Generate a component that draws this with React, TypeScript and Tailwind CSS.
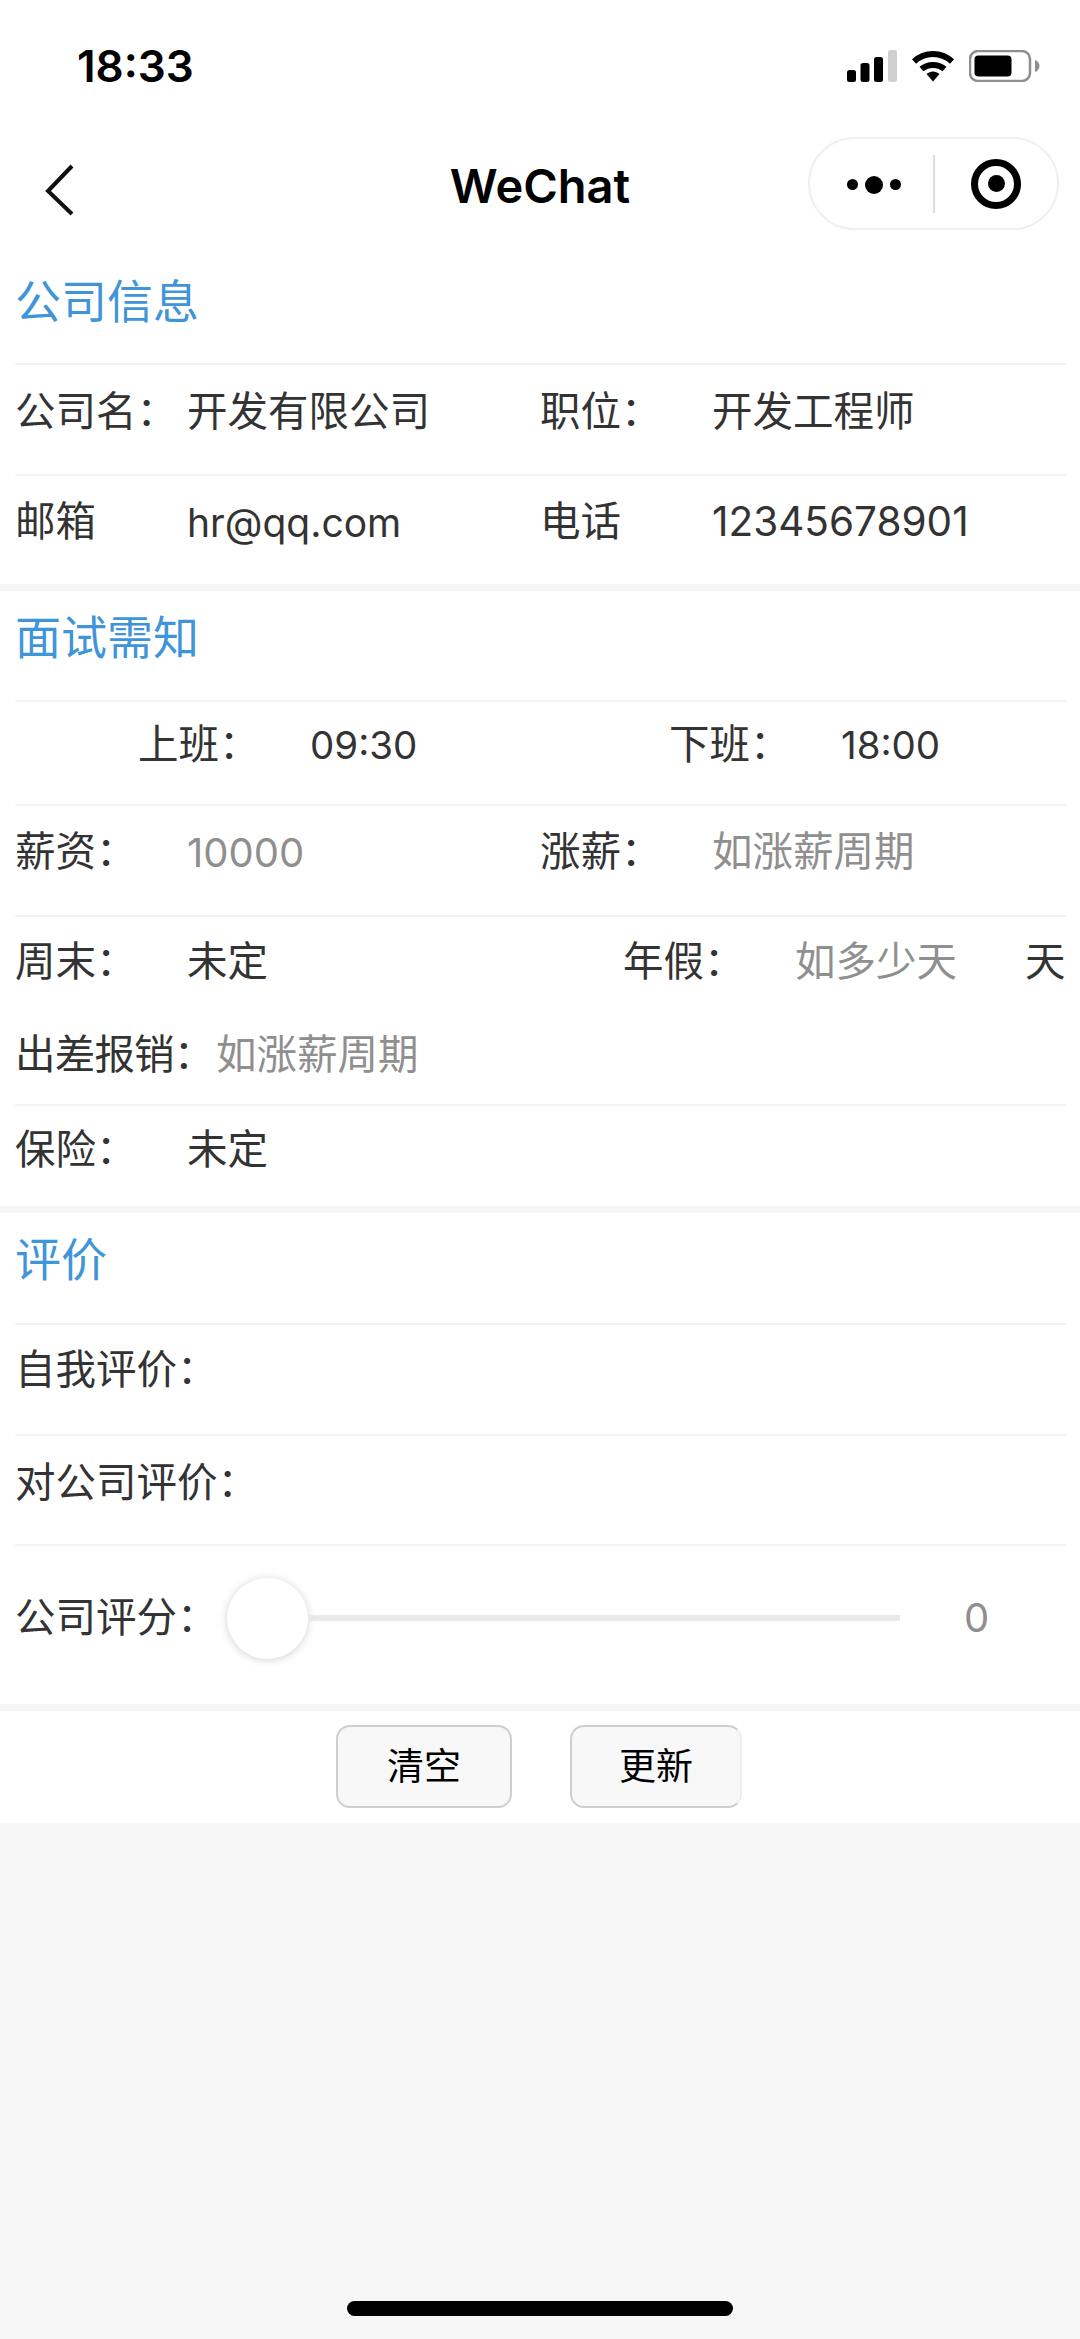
const cjk = "font-['Inter','Noto_Sans_CJK_SC',sans-serif]";

function Signal() {
  return (
    <svg width="50" height="32" viewBox="0 0 50 32" fill="none">
      <rect x="0" y="20" width="9" height="12" rx="2.5" fill="#000" />
      <rect x="13.5" y="13" width="9" height="19" rx="2.5" fill="#000" />
      <rect x="27" y="7" width="9" height="25" rx="2.5" fill="#000" />
      <rect x="41" y="0" width="9" height="32" rx="2.5" fill="#cfcfcf" />
    </svg>
  );
}

function Wifi() {
  return (
    <svg width="44" height="32" viewBox="0 0 44 32" fill="none">
      <path d="M3 11.5C14 1.5 30 1.5 41 11.5" stroke="#000" strokeWidth="6" />
      <path d="M10.5 19C17 13.5 27 13.5 33.5 19" stroke="#000" strokeWidth="6" />
      <path d="M15.5 24C19.5 20.5 24.5 20.5 28.5 24L22 31.5Z" fill="#000" />
    </svg>
  );
}

function Battery() {
  return (
    <svg width="71" height="32" viewBox="0 0 71 32" fill="none">
      <rect x="1" y="1" width="60" height="30" rx="8" stroke="#8e8e8e" strokeWidth="2.5" />
      <rect x="5.5" y="5.5" width="37" height="21" rx="4" fill="#000" />
      <path d="M66 10C69 11 70.5 13.5 70.5 16C70.5 18.5 69 21 66 22Z" fill="#8e8e8e" />
    </svg>
  );
}

function Row({ children, border = true, className = "" }: { children: React.ReactNode; border?: boolean; className?: string }) {
  return (
    <div className={`ml-[15px] mr-[14px] flex items-center ${border ? "border-b-2 border-[#f3f3f3]" : ""} ${className}`}>
      {children}
    </div>
  );
}

function Field({ label, value, muted = false, className = "", valueClass = "" }: { label: string; value: string; muted?: boolean; className?: string; valueClass?: string }) {
  return (
    <div className={`flex items-center ${className}`}>
      <span className="w-[172px] text-[#333333]">{label}</span>
      <span className={`${muted ? "text-[#8f8f8f]" : "text-[#333333]"} ${valueClass}`}>{value}</span>
    </div>
  );
}

function SectionTitle({ text, className }: { text: string; className: string }) {
  return (
    <div className={`ml-[15px] mr-[14px] flex items-center border-b-2 border-[#f3f3f3] text-[46px] text-[#4095d9] ${className}`}>
      {text}
    </div>
  );
}

function Band() {
  return <div className="h-[7px] bg-[#f6f6f6]" />;
}

export default function App() {
  return (
    <div className={`relative flex h-[2339px] w-[1080px] flex-col overflow-hidden bg-[#f7f7f7] text-[40.5px] leading-none ${cjk}`}>
      <div className="bg-white">
        {/* status bar */}
        <div className="flex h-[132px] items-start justify-between pt-[44px] pl-[77px] pr-[40px]">
          <span className="text-[44px] leading-[44px] font-semibold text-black">18:33</span>
          <div className="flex items-center gap-[14px] pt-[6px]">
            <Signal />
            <Wifi />
            <Battery />
          </div>
        </div>

        {/* nav */}
        <div className="relative flex h-[108px] items-center justify-center">
          <svg className="absolute left-[44px] top-[32px]" width="32" height="52" viewBox="0 0 32 52" fill="none">
            <path d="M28 2L4 27L28 50" stroke="#111" strokeWidth="4" />
          </svg>
          <span className="-mt-[2px] text-[47px] font-semibold text-black">WeChat</span>
          <div className="absolute left-[808px] top-[5px] flex h-[93px] w-[251px] items-center rounded-full border-2 border-[#f0f0f0]">
            <div className="flex flex-1 items-center justify-center gap-[7px] pl-[5px] pt-[2px]">
              <div className="size-[11px] rounded-full bg-black" />
              <div className="size-[18px] rounded-full bg-black" />
              <div className="size-[11px] rounded-full bg-black" />
            </div>
            <div className="h-[58px] w-[2px] bg-[#dddddd]" />
            <div className="flex w-[122px] items-center justify-center">
              <div className="flex size-[50px] items-center justify-center rounded-full border-[7px] border-black">
                <div className="size-[17px] rounded-full bg-black" />
              </div>
            </div>
          </div>
        </div>

        {/* company info */}
        <SectionTitle text="公司信息" className="h-[125px] pb-[2px]" />
        <Row className="h-[111px] pb-[15px]">
          <Field label="公司名：" value="开发有限公司" className="w-[525px]" />
          <Field label="职位：" value="开发工程师" />
        </Row>
        <Row border={false} className="h-[108px] pb-[15px]">
          <Field label="邮箱" value="hr@qq.com" className="w-[525px]" valueClass="text-[39px]" />
          <Field label="电话" value="12345678901" valueClass="text-[40.5px]" />
        </Row>
        <Band />

        {/* interview notes */}
        <SectionTitle text="面试需知" className="h-[111px] pb-[18px]" />
        <Row className="h-[104px] pb-[16px] pl-[123px]">
          <Field label="上班：" value="09:30" className="w-[531px]" valueClass="text-[38.5px]" />
          <Field label="下班：" value="18:00" valueClass="text-[38.5px]" />
        </Row>
        <Row className="h-[111px] pb-[16px]">
          <Field label="薪资：" value="10000" muted className="w-[525px]" valueClass="text-[40px]" />
          <Field label="涨薪：" value="如涨薪周期" muted />
        </Row>
        <Row border={false} className="h-[94px] pb-[3px]">
          <Field label="周末：" value="未定" className="w-[608px]" />
          <Field label="年假：" value="如多少天" muted className="w-[402px]" />
          <span className="text-[#333333]">天</span>
        </Row>
        <Row className="h-[95px] pb-[4px]">
          <span className="w-[201px] shrink-0 whitespace-nowrap text-[#333333] tracking-[-0.8px]">出差报销：</span>
          <span className="text-[#8f8f8f]">如涨薪周期</span>
        </Row>
        <Row border={false} className="h-[100px] pb-[12px]">
          <Field label="保险：" value="未定" />
        </Row>
        <Band />

        {/* review */}
        <SectionTitle text="评价" className="h-[112px] pb-[18px]" />
        <Row className="h-[111px] pb-[18px]">
          <span className="text-[#333333]">自我评价：</span>
        </Row>
        <Row className="h-[110px] pb-[14px]">
          <span className="text-[#333333]">对公司评价：</span>
        </Row>
        <Row border={false} className="h-[158px] pb-[14px]">
          <span className="w-[212px] text-[#333333]">公司评分：</span>
          <div className="flex w-[673px] items-center">
            <div className="size-[81px] shrink-0 rounded-full bg-white shadow-[0_1px_8px_rgba(0,0,0,0.18)]" />
            <div className="h-[6px] flex-1 bg-[#e9e9e9]" />
          </div>
          <span className="ml-[64px] text-[40px] text-[#8f8f8f]">0</span>
        </Row>
        <Band />

        {/* actions */}
        <div className="flex h-[112px] justify-center gap-[58px] pr-[2px] pt-[14px]">
          <button className="h-[83px] w-[176px] rounded-[14px] border-2 border-[#cfcfcf] bg-[#f8f8f8] text-[37px] text-black">清空</button>
          <button className="h-[83px] w-[172px] rounded-[14px] border-2 border-[#cfcfcf] border-r-[#efefef] bg-[#f8f8f8] text-[37px] text-black">更新</button>
        </div>
      </div>

      {/* home indicator */}
      <div className="absolute bottom-[23px] left-[347px] h-[15px] w-[386px] rounded-full bg-black" />
    </div>
  );
}
